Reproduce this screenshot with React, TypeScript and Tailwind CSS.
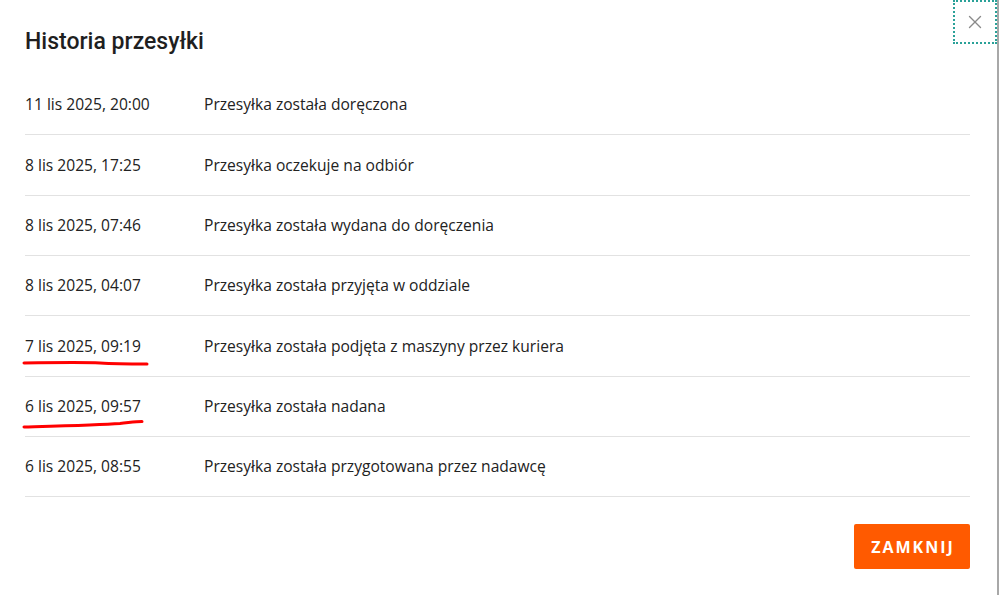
import { X } from 'lucide-react'

const events = [
  { date: '11 lis 2025, 20:00', text: 'Przesyłka została doręczona' },
  { date: '8 lis 2025, 17:25', text: 'Przesyłka oczekuje na odbiór' },
  { date: '8 lis 2025, 07:46', text: 'Przesyłka została wydana do doręczenia' },
  { date: '8 lis 2025, 04:07', text: 'Przesyłka została przyjęta w oddziale' },
  { date: '7 lis 2025, 09:19', text: 'Przesyłka została podjęta z maszyny przez kuriera' },
  { date: '6 lis 2025, 09:57', text: 'Przesyłka została nadana' },
  { date: '6 lis 2025, 08:55', text: 'Przesyłka została przygotowana przez nadawcę' },
]

export default function App() {
  return (
    <div className="relative w-[999px] h-[595px] bg-white overflow-hidden font-['Open_Sans',sans-serif] text-[#222]">
      <div className="relative w-[999px] h-[595px] border-r-2 border-[#a8a8a8] pl-[25px] pr-[27px]">
        {/* close */}
        <button className="absolute top-0 right-0 w-[44px] h-[44px] flex items-center justify-center outline-2 outline-dotted outline-offset-[-2px] outline-[#2aa198] text-[#8a8a8a]">
          <X size={22} strokeWidth={1.5} />
        </button>

        <div className="h-[75px] pt-[27px]">
          <h2 className="font-['Roboto',sans-serif] font-medium text-[23px] leading-[30px] text-[#1f1f1f]">Historia przesyłki</h2>
        </div>

        <div>
          {events.map(e => (
            <div key={e.date + e.text} className="h-[60.33px] flex items-center pt-px border-b border-[#e2e2e2] text-[15.6px]">
              <span className="w-[179px] shrink-0">{e.date}</span>
              <span>{e.text}</span>
            </div>
          ))}
        </div>

        <div className="flex justify-end pt-[27px]">
          <button className="w-[116px] h-[45px] bg-[#ff5a00] rounded-[2px] text-white font-bold text-[16px] tracking-[2px] pl-[2px]">
            ZAMKNIJ
          </button>
        </div>
      </div>

      {/* hand-drawn marks */}
      <svg className="absolute inset-0 pointer-events-none" width="999" height="595">
        <path d="M24 363 C 60 362.5, 90 362.5, 100 363 C 115 364, 130 364, 147 364" stroke="#f00" strokeWidth="3" fill="none" strokeLinecap="round" />
        <path d="M24 427 C 60 426, 100 425, 120 423.5 C 130 422.5, 136 421.5, 142 421.5" stroke="#f00" strokeWidth="3" fill="none" strokeLinecap="round" />
      </svg>
    </div>
  )
}
